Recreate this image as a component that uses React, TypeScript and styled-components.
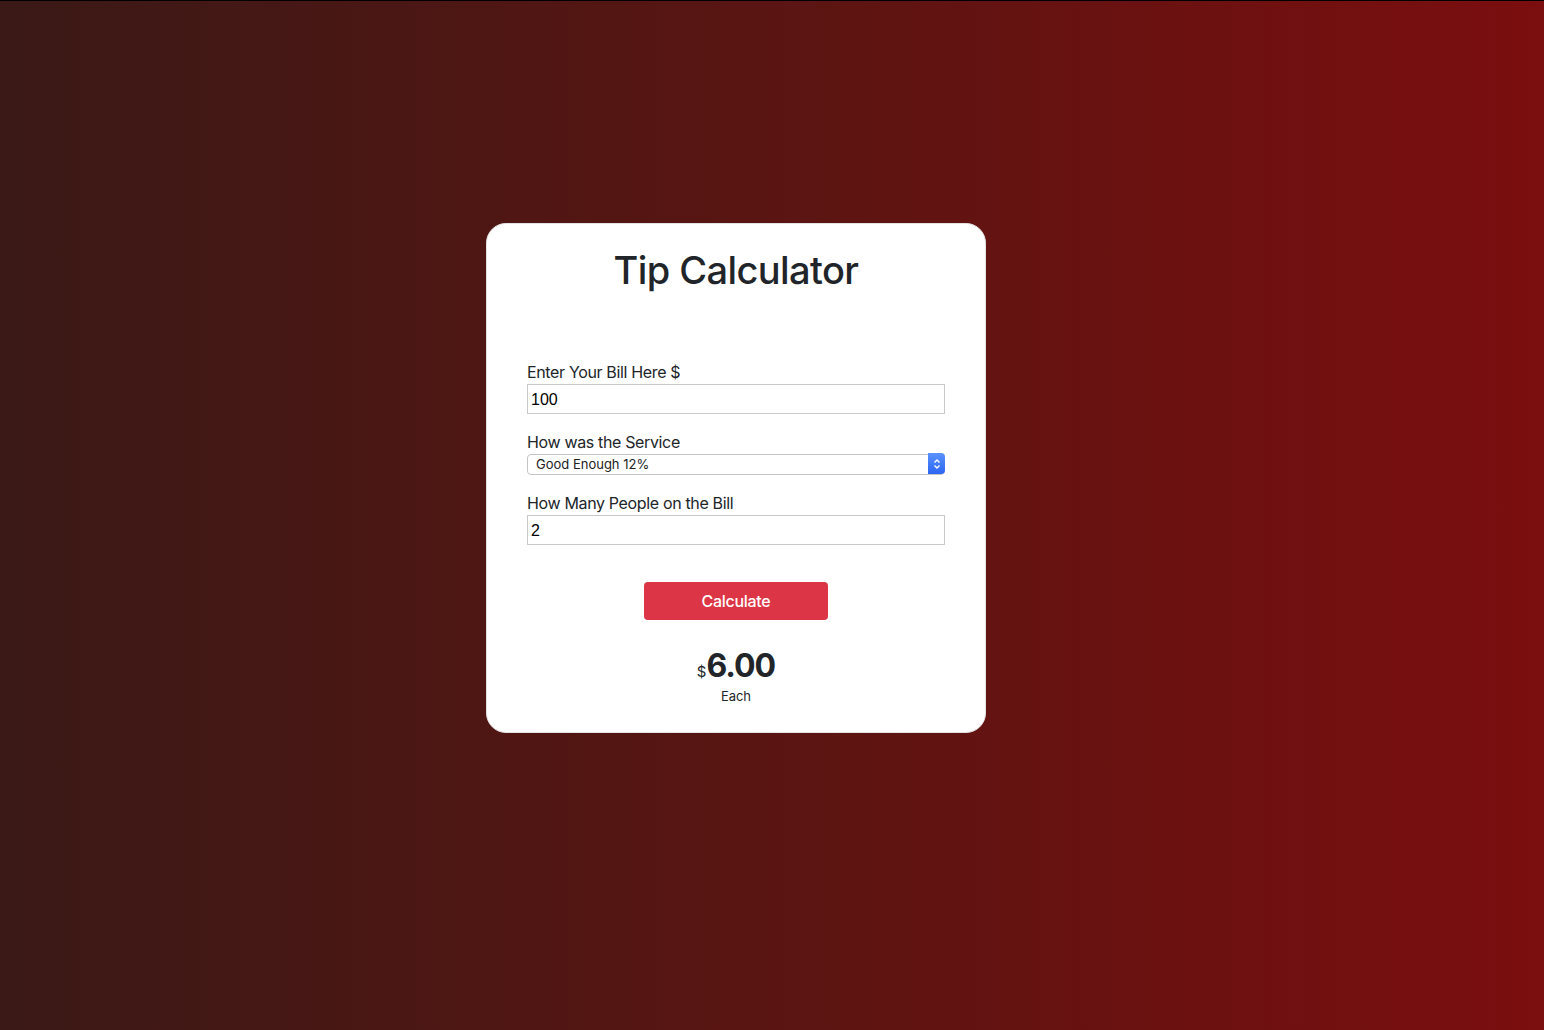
import React, { useState } from 'react';
import styled, { createGlobalStyle } from 'styled-components';

const GlobalStyle = createGlobalStyle`
  * {
    box-sizing: border-box;
  }
  body {
    margin: 0;
    font-family: Inter, "Liberation Sans", sans-serif;
    color: #212529;
  }
`;

const tips = [
  { label: 'Outstanding 30%', value: 0.3 },
  { label: 'Good 20%', value: 0.2 },
  { label: 'Good Enough 12%', value: 0.12 },
  { label: 'Bad 5%', value: 0.05 },
];

const App = () => {
  const [bill, setBill] = useState('100');
  const [tip, setTip] = useState('0.12');
  const [people, setPeople] = useState('2');
  const [each, setEach] = useState(6);

  const calculate = () => {
    const b = parseFloat(bill) || 0;
    const p = parseInt(people) || 1;
    setEach((b * parseFloat(tip)) / p);
  };

  return (
    <>
      <GlobalStyle />
      <Page>
        <Card>
          <Title>Tip Calculator</Title>
          <Form>
            <Field>
              <Label>Enter Your Bill Here $</Label>
              <Input value={bill} onChange={(e) => setBill(e.target.value)} />
            </Field>
            <Field>
              <Label>How was the Service</Label>
              <SelectWrap>
                <Select value={tip} onChange={(e) => setTip(e.target.value)}>
                  {tips.map((t) => (
                    <option key={t.label} value={String(t.value)}>
                      {t.label}
                    </option>
                  ))}
                </Select>
                <SelectArrow>
                  <svg width="8" height="12" viewBox="0 0 8 12" fill="none">
                    <path d="M1.5 4.5L4 2L6.5 4.5" stroke="#fff" strokeWidth="1.4" />
                    <path d="M1.5 7.5L4 10L6.5 7.5" stroke="#fff" strokeWidth="1.4" />
                  </svg>
                </SelectArrow>
              </SelectWrap>
            </Field>
            <Field>
              <Label>How Many People on the Bill</Label>
              <Input value={people} onChange={(e) => setPeople(e.target.value)} />
            </Field>
          </Form>
          <Button onClick={calculate}>Calculate</Button>
          <Result>
            <Amount>
              <Dollar>$</Dollar>
              {each.toFixed(2)}
            </Amount>
            <Each>Each</Each>
          </Result>
        </Card>
      </Page>
    </>
  );
};

const Page = styled.div`
  min-height: 100vh;
  border-top: 1px solid #000;
  background: linear-gradient(to right, #3a1916 0%, #5a1512 50%, #7b0e0f 100%);
  display: flex;
  justify-content: center;
  padding: 222px 72px 0 0;
`;

const Card = styled.div`
  width: 500px;
  height: 510px;
  background: #fff;
  border-radius: 20px;
  border: 1px solid #e3e3e3;
  padding: 22px 40px 0;
  display: flex;
  flex-direction: column;
  align-items: center;
`;

const Title = styled.h1`
  margin: 0;
  font-size: 38px;
  font-weight: 500;
  line-height: 48px;
  letter-spacing: -0.6px;
`;

const Form = styled.div`
  width: 100%;
  margin-top: 66px;
  display: flex;
  flex-direction: column;
  gap: 16px;
`;

const Field = styled.div`
  display: flex;
  flex-direction: column;
`;

const Label = styled.label`
  font-size: 16px;
  line-height: 24px;
  letter-spacing: -0.35px;
  color: #212529;
`;

const Input = styled.input`
  width: 100%;
  height: 30px;
  border: 1px solid #c8c8c8;
  border-radius: 0;
  padding: 1px 3px 0;
  font-family: "Liberation Sans", Arial, sans-serif;
  font-size: 16px;
  color: #000;
  outline: none;
`;

const SelectWrap = styled.div`
  position: relative;
  height: 21px;
  margin: -1px 0 1px;
`;

const Select = styled.select`
  appearance: none;
  width: 100%;
  height: 21px;
  border: 1px solid #c4c4c4;
  border-radius: 4px;
  background: #fff;
  padding: 0 24px 0 8px;
  font-family: Inter, "Liberation Sans", sans-serif;
  font-size: 13px;
  color: #222;
  outline: none;
`;

const SelectArrow = styled.div`
  position: absolute;
  top: 0;
  right: 0;
  width: 17px;
  height: 21px;
  border-radius: 0 4px 4px 0;
  background: linear-gradient(#5a92ff, #2c66f2);
  display: flex;
  align-items: center;
  justify-content: center;
  pointer-events: none;
`;

const Button = styled.button`
  margin-top: 37px;
  width: 184px;
  height: 38px;
  border: none;
  border-radius: 4px;
  background: #dc3545;
  color: #fff;
  font-family: Inter, "Liberation Sans", sans-serif;
  font-size: 16px;
  font-weight: 500;
  letter-spacing: -0.3px;
  cursor: pointer;
`;

const Result = styled.div`
  margin-top: 27px;
  display: flex;
  flex-direction: column;
  align-items: center;
`;

const Amount = styled.div`
  font-size: 32px;
  font-weight: 700;
  line-height: 38px;
  letter-spacing: -1px;
  color: #212529;
`;

const Dollar = styled.span`
  font-size: 15px;
  font-weight: 400;
  letter-spacing: 0;
`;

const Each = styled.div`
  margin-top: -3px;
  font-size: 13px;
  line-height: 16px;
  letter-spacing: -0.1px;
  color: #212529;
`;

export default App;
